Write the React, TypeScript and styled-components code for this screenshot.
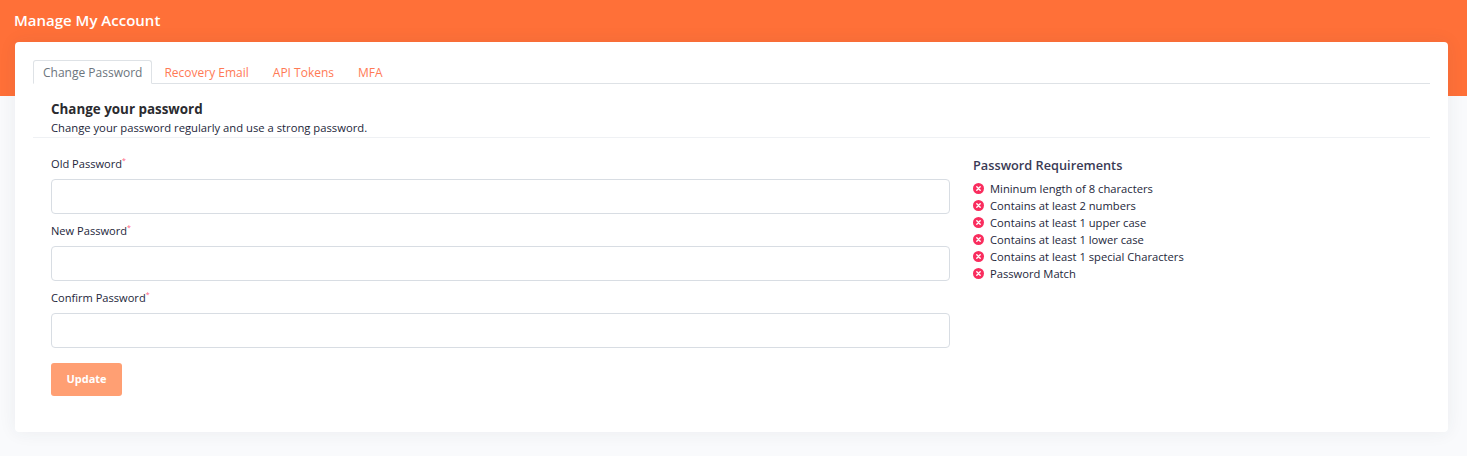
import React from "react";
import styled, { createGlobalStyle } from "styled-components";

const GlobalStyle = createGlobalStyle`
  html, body {
    margin: 0;
    padding: 0;
    background: #f9fafc;
    font-family: "Open Sans", "Liberation Sans", sans-serif;
  }
  * {
    box-sizing: border-box;
  }
`;

const Page = styled.div`
  width: 1467px;
  height: 456px;
  overflow: hidden;
`;

const Banner = styled.div`
  height: 96px;
  padding: 10px 14px 0;
  background: #ff7038;
`;

const BannerTitle = styled.h1`
  margin: 0;
  font-size: 15px;
  line-height: 20px;
  font-weight: 600;
  color: #fff;
`;

const Card = styled.div`
  margin: -54px 19px 0 15px;
  height: 390px;
  padding: 18px 18px 0;
  background: #fff;
  border-radius: 4px;
  box-shadow: 0 0 18px rgba(40, 50, 70, 0.07);
`;

const Tabs = styled.div`
  display: flex;
  height: 24px;
  border-bottom: 1px solid #dee2e6;
`;

const Tab = styled.div<{ $active?: boolean }>`
  height: 24px;
  padding: ${({ $active }) => ($active ? "3px 9px 0" : "3px 11px 0")};
  font-size: 12px;
  line-height: 18px;
  color: ${({ $active }) => ($active ? "#6c757d" : "#ff7a55")};
  background: ${({ $active }) => ($active ? "#fff" : "transparent")};
  border: 1px solid ${({ $active }) => ($active ? "#dee2e6" : "transparent")};
  border-bottom-color: ${({ $active }) => ($active ? "#fff" : "transparent")};
  border-radius: 3px 3px 0 0;
`;

const Intro = styled.div`
  height: 54px;
  padding: 16px 18px 0;
  border-bottom: 1px solid #eff1f4;
`;

const Heading = styled.h2`
  margin: 0;
  font-size: 13.4px;
  line-height: 18px;
  font-weight: 700;
  color: #2b2b2f;
`;

const Subheading = styled.p`
  margin: 2px 0 0;
  font-size: 11.25px;
  line-height: 16px;
  color: #23263a;
`;

const Columns = styled.div`
  display: flex;
  padding: 0 18px;
`;

const FormColumn = styled.form`
  width: 899px;
  padding-top: 18px;
`;

const Field = styled.div`
  margin-bottom: 9px;
`;

const Label = styled.label`
  display: block;
  height: 16px;
  font-size: 11.1px;
  line-height: 16px;
  color: #23263a;
  margin-bottom: 7px;

  sup {
    font-size: 7px;
    line-height: 0;
    color: #ff5c80;
  }
`;

const Input = styled.input`
  display: block;
  width: 100%;
  height: 35px;
  background: #fff;
  border: 1px solid #d8dde3;
  border-radius: 4px;
  outline: none;
`;

const UpdateButton = styled.button`
  display: block;
  width: 71px;
  height: 33px;
  margin-top: 15px;
  padding: 0 0 2px;
  font-family: inherit;
  font-size: 11px;
  font-weight: 700;
  color: #fff;
  background: #ff9f73;
  border: none;
  border-radius: 3px;
`;

const Requirements = styled.div`
  margin-left: 23px;
  padding-top: 18px;
`;

const RequirementsTitle = styled.h3`
  margin: 0 0 6px;
  font-size: 12.75px;
  line-height: 18px;
  font-weight: 600;
  color: #3a3a55;
`;

const RequirementList = styled.ul`
  margin: 0;
  padding: 0;
  list-style: none;
`;

const Requirement = styled.li`
  display: flex;
  align-items: center;
  gap: 6px;
  height: 17px;
  font-size: 11.2px;
  color: #23263a;
`;

const FailIcon = () => (
  <svg width="11" height="11" viewBox="0 0 11 11" aria-hidden="true">
    <circle cx="5.5" cy="5.5" r="5.5" fill="#f92d5e" />
    <path d="M3.8 3.8l3.4 3.4M7.2 3.8l-3.4 3.4" stroke="#fff" strokeWidth="1.4" strokeLinecap="round" />
  </svg>
);

const fields = ["Old Password", "New Password", "Confirm Password"];

const rules = [
  "Mininum length of 8 characters",
  "Contains at least 2 numbers",
  "Contains at least 1 upper case",
  "Contains at least 1 lower case",
  "Contains at least 1 special Characters",
  "Password Match",
];

const App: React.FC = () => {
  return (
    <Page>
      <GlobalStyle />
      <Banner>
        <BannerTitle>Manage My Account</BannerTitle>
      </Banner>
      <Card>
        <Tabs>
          <Tab $active>Change Password</Tab>
          <Tab>Recovery Email</Tab>
          <Tab>API Tokens</Tab>
          <Tab>MFA</Tab>
        </Tabs>
        <Intro>
          <Heading>Change your password</Heading>
          <Subheading>Change your password regularly and use a strong password.</Subheading>
        </Intro>
        <Columns>
          <FormColumn>
            {fields.map((field) => (
              <Field key={field}>
                <Label>
                  {field}
                  <sup>*</sup>
                </Label>
                <Input type="password" />
              </Field>
            ))}
            <UpdateButton type="button">Update</UpdateButton>
          </FormColumn>
          <Requirements>
            <RequirementsTitle>Password Requirements</RequirementsTitle>
            <RequirementList>
              {rules.map((rule) => (
                <Requirement key={rule}>
                  <FailIcon />
                  {rule}
                </Requirement>
              ))}
            </RequirementList>
          </Requirements>
        </Columns>
      </Card>
    </Page>
  );
};

export default App;
